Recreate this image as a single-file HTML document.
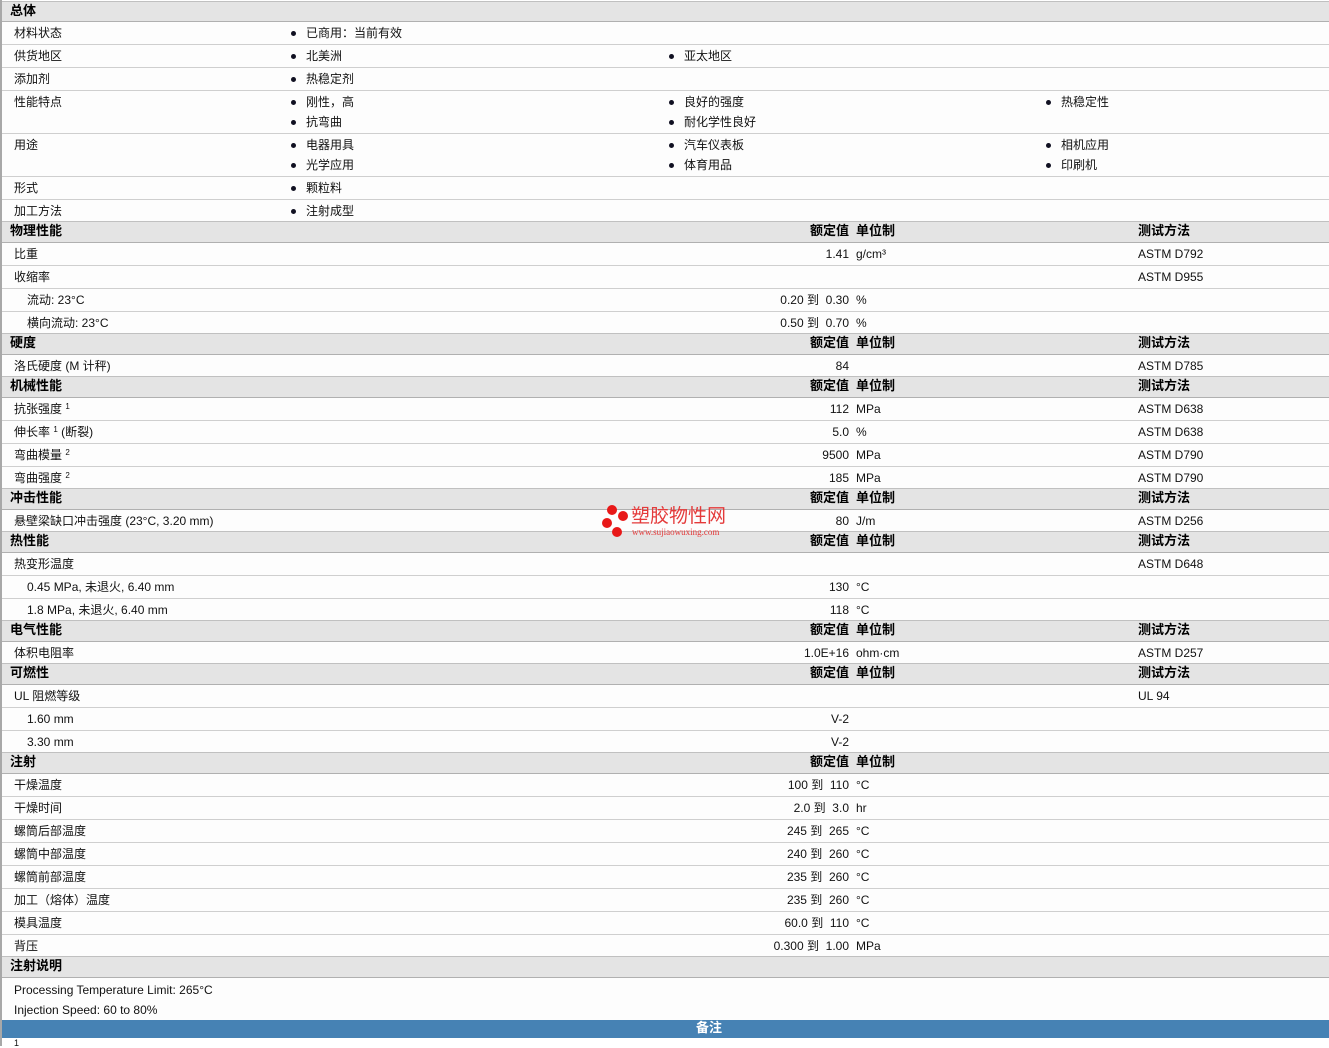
<!DOCTYPE html>
<html><head><meta charset="utf-8">
<style>
*{margin:0;padding:0;box-sizing:border-box}
body{width:1329px;height:1046px;background:#fff;position:relative;overflow:hidden;font-family:"Liberation Sans","Noto Sans CJK SC",sans-serif;font-size:12px;color:#111}
#lb{position:absolute;left:0;top:0;width:2px;height:1046px;background:#a8a8a8}
.r{position:absolute;left:2px;right:0}
.h{background:#e4e4e4;border-top:1px solid #c0c0c0;border-bottom:1px solid #b0b0b0;font-weight:bold;font-size:13px;color:#000}
.d{background:#fdfdfd;border-bottom:1px solid #cfcfcf}
.r span{position:absolute;white-space:nowrap;line-height:16px}
.h span{top:1px}
.d span{top:3px}
.l{left:12px}.l2{left:25px}.hl{left:8px}
.t1{left:304px}.t2{left:682px}.t3{left:1059px}
.b{position:absolute;width:5px;height:5px;border-radius:50%;background:#112;top:9px}
.b1{left:289px}.b2{left:667px}.b3{left:1044px}
.v{right:480px;text-align:right}
.u{left:854px}.m{left:1136px}
.d .s2{top:23px}
.bb2{top:29px}
sup{font-size:8px;position:relative;top:-4px;vertical-align:baseline;line-height:0}
</style></head><body>
<div id="lb"></div>

<div class="r h" style="top:1px;height:21px"><span class="hl">总体</span></div>
<div class="r d" style="top:22px;height:23px"><span class="l">材料状态</span><i class="b b1"></i><span class="t1">已商用：当前有效</span></div>
<div class="r d" style="top:45px;height:23px"><span class="l">供货地区</span><i class="b b1"></i><span class="t1">北美洲</span><i class="b b2"></i><span class="t2">亚太地区</span></div>
<div class="r d" style="top:68px;height:23px"><span class="l">添加剂</span><i class="b b1"></i><span class="t1">热稳定剂</span></div>
<div class="r d" style="top:91px;height:43px"><span class="l">性能特点</span><i class="b b1"></i><span class="t1">刚性，高</span><i class="b b2"></i><span class="t2">良好的强度</span><i class="b b3"></i><span class="t3">热稳定性</span>
<i class="b b1 bb2"></i><span class="t1 s2">抗弯曲</span><i class="b b2 bb2"></i><span class="t2 s2">耐化学性良好</span></div>
<div class="r d" style="top:134px;height:43px"><span class="l">用途</span><i class="b b1"></i><span class="t1">电器用具</span><i class="b b2"></i><span class="t2">汽车仪表板</span><i class="b b3"></i><span class="t3">相机应用</span>
<i class="b b1 bb2"></i><span class="t1 s2">光学应用</span><i class="b b2 bb2"></i><span class="t2 s2">体育用品</span><i class="b b3 bb2"></i><span class="t3 s2">印刷机</span></div>
<div class="r d" style="top:177px;height:23px"><span class="l">形式</span><i class="b b1"></i><span class="t1">颗粒料</span></div>
<div class="r d" style="top:200px;height:22px"><span class="l">加工方法</span><i class="b b1"></i><span class="t1">注射成型</span></div>

<div class="r h" style="top:221px;height:22px"><span class="hl">物理性能</span><span class="v">额定值</span><span class="u">单位制</span><span class="m">测试方法</span></div>
<div class="r d" style="top:243px;height:23px"><span class="l">比重</span><span class="v">1.41</span><span class="u">g/cm³</span><span class="m">ASTM D792</span></div>
<div class="r d" style="top:266px;height:23px"><span class="l">收缩率</span><span class="m">ASTM D955</span></div>
<div class="r d" style="top:289px;height:23px"><span class="l2">流动: 23°C</span><span class="v">0.20 到&nbsp; 0.30</span><span class="u">%</span></div>
<div class="r d" style="top:312px;height:22px"><span class="l2">横向流动: 23°C</span><span class="v">0.50 到&nbsp; 0.70</span><span class="u">%</span></div>

<div class="r h" style="top:333px;height:22px"><span class="hl">硬度</span><span class="v">额定值</span><span class="u">单位制</span><span class="m">测试方法</span></div>
<div class="r d" style="top:355px;height:22px"><span class="l">洛氏硬度 (M 计秤)</span><span class="v">84</span><span class="m">ASTM D785</span></div>

<div class="r h" style="top:376px;height:22px"><span class="hl">机械性能</span><span class="v">额定值</span><span class="u">单位制</span><span class="m">测试方法</span></div>
<div class="r d" style="top:398px;height:23px"><span class="l">抗张强度 <sup>1</sup></span><span class="v">112</span><span class="u">MPa</span><span class="m">ASTM D638</span></div>
<div class="r d" style="top:421px;height:23px"><span class="l">伸长率 <sup>1</sup> (断裂)</span><span class="v">5.0</span><span class="u">%</span><span class="m">ASTM D638</span></div>
<div class="r d" style="top:444px;height:23px"><span class="l">弯曲模量 <sup>2</sup></span><span class="v">9500</span><span class="u">MPa</span><span class="m">ASTM D790</span></div>
<div class="r d" style="top:467px;height:22px"><span class="l">弯曲强度 <sup>2</sup></span><span class="v">185</span><span class="u">MPa</span><span class="m">ASTM D790</span></div>

<div class="r h" style="top:488px;height:22px"><span class="hl">冲击性能</span><span class="v">额定值</span><span class="u">单位制</span><span class="m">测试方法</span></div>
<div class="r d" style="top:510px;height:22px"><span class="l">悬壁梁缺口冲击强度 (23°C, 3.20 mm)</span><span class="v">80</span><span class="u">J/m</span><span class="m">ASTM D256</span></div>

<div class="r h" style="top:531px;height:22px"><span class="hl">热性能</span><span class="v">额定值</span><span class="u">单位制</span><span class="m">测试方法</span></div>
<div class="r d" style="top:553px;height:23px"><span class="l">热变形温度</span><span class="m">ASTM D648</span></div>
<div class="r d" style="top:576px;height:23px"><span class="l2">0.45 MPa, 未退火, 6.40 mm</span><span class="v">130</span><span class="u">°C</span></div>
<div class="r d" style="top:599px;height:22px"><span class="l2">1.8 MPa, 未退火, 6.40 mm</span><span class="v">118</span><span class="u">°C</span></div>

<div class="r h" style="top:620px;height:22px"><span class="hl">电气性能</span><span class="v">额定值</span><span class="u">单位制</span><span class="m">测试方法</span></div>
<div class="r d" style="top:642px;height:22px"><span class="l">体积电阻率</span><span class="v">1.0E+16</span><span class="u">ohm·cm</span><span class="m">ASTM D257</span></div>

<div class="r h" style="top:663px;height:22px"><span class="hl">可燃性</span><span class="v">额定值</span><span class="u">单位制</span><span class="m">测试方法</span></div>
<div class="r d" style="top:685px;height:23px"><span class="l">UL 阻燃等级</span><span class="m">UL 94</span></div>
<div class="r d" style="top:708px;height:23px"><span class="l2">1.60 mm</span><span class="v">V-2</span></div>
<div class="r d" style="top:731px;height:22px"><span class="l2">3.30 mm</span><span class="v">V-2</span></div>

<div class="r h" style="top:752px;height:22px"><span class="hl">注射</span><span class="v">额定值</span><span class="u">单位制</span></div>
<div class="r d" style="top:774px;height:23px"><span class="l">干燥温度</span><span class="v">100 到&nbsp; 110</span><span class="u">°C</span></div>
<div class="r d" style="top:797px;height:23px"><span class="l">干燥时间</span><span class="v">2.0 到&nbsp; 3.0</span><span class="u">hr</span></div>
<div class="r d" style="top:820px;height:23px"><span class="l">螺筒后部温度</span><span class="v">245 到&nbsp; 265</span><span class="u">°C</span></div>
<div class="r d" style="top:843px;height:23px"><span class="l">螺筒中部温度</span><span class="v">240 到&nbsp; 260</span><span class="u">°C</span></div>
<div class="r d" style="top:866px;height:23px"><span class="l">螺筒前部温度</span><span class="v">235 到&nbsp; 260</span><span class="u">°C</span></div>
<div class="r d" style="top:889px;height:23px"><span class="l">加工（熔体）温度</span><span class="v">235 到&nbsp; 260</span><span class="u">°C</span></div>
<div class="r d" style="top:912px;height:23px"><span class="l">模具温度</span><span class="v">60.0 到&nbsp; 110</span><span class="u">°C</span></div>
<div class="r d" style="top:935px;height:22px"><span class="l">背压</span><span class="v">0.300 到&nbsp; 1.00</span><span class="u">MPa</span></div>

<div class="r h" style="top:956px;height:22px"><span class="hl">注射说明</span></div>
<div class="r" style="top:978px;height:42px;background:#fdfdfd"><span class="l" style="top:4px">Processing Temperature Limit: 265°C</span><span class="l" style="top:24px">Injection Speed: 60 to 80%</span></div>
<div class="r" style="top:1020px;height:18px;background:#4682b4;color:#fff;font-weight:bold;font-size:13px"><span style="left:694px;top:0">备注</span></div>
<div class="r" style="top:1038px;height:8px"><span class="l" style="top:1px;font-size:9px;line-height:9px">1</span></div>

<!-- watermark -->
<div style="position:absolute;left:602px;top:505px;width:130px;height:34px">
<i style="position:absolute;left:5px;top:0;width:10px;height:10px;border-radius:50%;background:#e81818"></i>
<i style="position:absolute;left:16px;top:6px;width:10px;height:10px;border-radius:50%;background:#e81818"></i>
<i style="position:absolute;left:0;top:13px;width:10px;height:10px;border-radius:50%;background:#e81818"></i>
<i style="position:absolute;left:10px;top:22px;width:10px;height:10px;border-radius:50%;background:#e81818"></i>
<span style="position:absolute;left:29px;top:2px;color:#e43a3a;font-size:19px;line-height:20px;white-space:nowrap">塑胶物性网</span>
<span style="position:absolute;left:30px;top:23px;color:#e43a3a;font-size:9px;line-height:9px;font-family:'Liberation Serif',serif;white-space:nowrap">www.sujiaowuxing.com</span>
</div>
</body></html>
